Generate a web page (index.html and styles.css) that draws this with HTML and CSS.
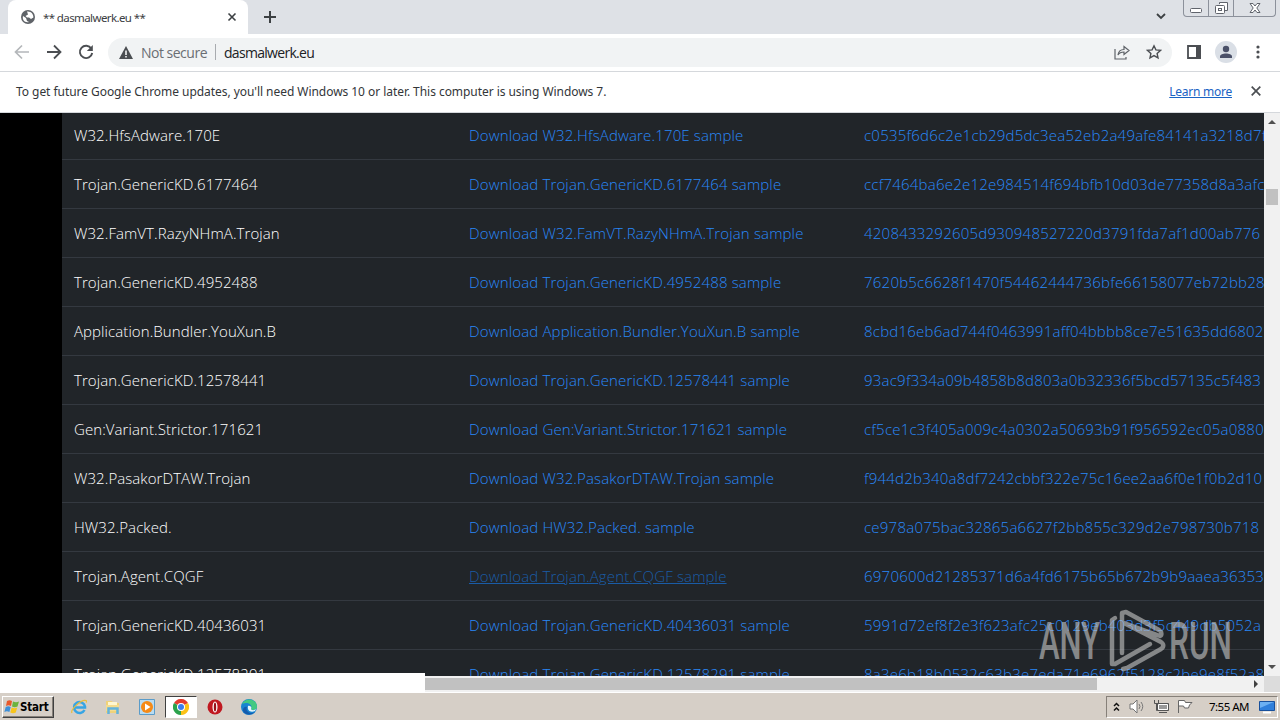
FILE: index.html
```html
<!DOCTYPE html>
<html lang="en">
<head>
    <meta charset="utf-8">
    <title>** dasmalwerk.eu **</title>
    <link rel="stylesheet" href="styles.css">
</head>
<body>
    <header class="tabstrip">
        <div class="tab">
            <svg class="globe" width="14" height="14" viewBox="0 0 14 14"><circle cx="7" cy="7" r="7" fill="#5f6368"/><path d="M2 6l3 2 1 3 2 1c-4 1-7-2-6-6zM6 1.5C10 1 12.500 4 12.400 7.500L10 9 8 7.500H6L4.500 6 7 4.500z" fill="#fff"/></svg>
            <span class="tab-title">** dasmalwerk.eu **</span>
            <svg class="tab-close" width="10" height="10" viewBox="0 0 10 10"><path d="M1.500 1.500l7 7m0-7l-7 7" stroke="#3c4043" stroke-width="1.600"/></svg>
        </div>
        <svg class="new-tab" width="12" height="12" viewBox="0 0 12 12"><path d="M6 0v12M0 6h12" stroke="#3c4043" stroke-width="2"/></svg>
        <svg class="tab-search" width="10" height="7" viewBox="0 0 10 7"><path d="M1 1l4 4 4-4" fill="none" stroke="#3c4043" stroke-width="1.800"/></svg>
        <div class="window-buttons">
            <span class="wb"><svg width="12" height="16" viewBox="0 0 12 16"><rect x=".5" y="8.500" width="11" height="4" rx="1" fill="#fff" stroke="#60646c"/></svg></span>
            <span class="wb"><svg width="13" height="16" viewBox="0 0 13 16"><path d="M4.500 4V2.500h8v8H10" fill="#fff" stroke="#60646c"/><rect x=".5" y="5.500" width="9" height="8" rx="1" fill="#fff" stroke="#60646c"/><rect x="3.500" y="8.500" width="3" height="2" fill="none" stroke="#60646c"/></svg></span>
            <span class="wb wide"><svg width="12" height="16" viewBox="0 0 12 16"><path d="M1 3.500h3l2 2.500 2-2.500h3L7.800 8l3.200 4.500H8L6 10l-2 2.500H1L4.200 8z" fill="#fff" stroke="#60646c"/></svg></span>
        </div>
    </header>

    <nav class="toolbar">
        <svg width="16" height="16" viewBox="0 0 16 16"><path d="M15 8H2m6-6.500L1.500 8 8 14.500" fill="none" stroke="#b4b7ba" stroke-width="1.700"/></svg>
        <svg width="16" height="16" viewBox="0 0 16 16"><path d="M1 8h13M8 1.500L14.500 8 8 14.500" fill="none" stroke="#4b4e52" stroke-width="1.800"/></svg>
        <svg width="16" height="16" viewBox="0 0 16 16"><path d="M13.300 4.500A6.200 6.200 0 1 0 14.200 9" fill="none" stroke="#4b4e52" stroke-width="1.900"/><path d="M14.800 1v6H8.800z" fill="#4b4e52"/></svg>
        <div class="omnibox">
            <svg width="14" height="13" viewBox="0 0 14 13"><path d="M7 0l7 13H0z" fill="#4b4e52"/><path d="M7 4.500V9m0 1v1.500" stroke="#fff" stroke-width="1.500"/></svg>
            <span class="security">Not secure</span>
            <span class="divider"></span>
            <span class="url">dasmalwerk.eu</span>
            <svg class="share" width="16" height="15" viewBox="0 0 16 15"><path d="M1 4v10h11v-2M4 10c.5-4 3-5.500 6-5.500V1.500l5 4-5 4V7C7.500 7 5.500 7.500 4 10z" fill="none" stroke="#5f6368" stroke-width="1.200"/></svg>
            <svg width="16" height="16" viewBox="0 0 16 16"><path d="M8 1.800l1.900 4.100 4.500.5-3.300 3 .9 4.400L8 11.600l-4 2.200.9-4.400-3.300-3 4.500-.5z" fill="none" stroke="#4b4e52" stroke-width="1.400"/></svg>
        </div>
        <svg class="panel" width="14" height="14" viewBox="0 0 14 14"><path d="M1 1h12v12H1z" fill="none" stroke="#4b4e52" stroke-width="1.800"/><path d="M9 0h5v14H9z" fill="#4b4e52"/></svg>
        <svg class="avatar" width="22" height="22" viewBox="0 0 22 22"><circle cx="11" cy="11" r="11" fill="#dadfe6"/><circle cx="11" cy="8" r="3.200" fill="#4a5068"/><path d="M5 17v-1.500c0-4 12-4 12 0V17z" fill="#4a5068"/></svg>
        <svg class="kebab" width="4" height="14" viewBox="0 0 4 14"><circle cx="2" cy="2" r="1.600" fill="#4b4e52"/><circle cx="2" cy="7" r="1.600" fill="#4b4e52"/><circle cx="2" cy="12" r="1.600" fill="#4b4e52"/></svg>
    </nav>

    <div class="infobar">
        <span class="info-text">To get future Google Chrome updates, you'll need Windows 10 or later. This computer is using Windows 7.</span>
        <a class="learn" href="#">Learn more</a>
        <svg width="10" height="10" viewBox="0 0 10 10"><path d="M.7.700l8.600 8.600m0-8.600L.7 9.300" stroke="#4b4e52" stroke-width="1.700"/></svg>
    </div>

    <main class="viewport">
        <div class="page">
            <table class="samples">
                <tr><td>W32.HfsAdware.170E</td><td><a href="#">Download W32.HfsAdware.170E sample</a></td><td class="hash"><a href="#">c0535f6d6c2e1cb29d5dc3ea52eb2a49afe84141a3218d7f</a></td></tr>
                <tr><td>Trojan.GenericKD.6177464</td><td><a href="#">Download Trojan.GenericKD.6177464 sample</a></td><td class="hash"><a href="#">ccf7464ba6e2e12e984514f694bfb10d03de77358d8a3afc</a></td></tr>
                <tr><td>W32.FamVT.RazyNHmA.Trojan</td><td><a href="#">Download W32.FamVT.RazyNHmA.Trojan sample</a></td><td class="hash"><a href="#">4208433292605d930948527220d3791fda7af1d00ab776</a></td></tr>
                <tr><td>Trojan.GenericKD.4952488</td><td><a href="#">Download Trojan.GenericKD.4952488 sample</a></td><td class="hash"><a href="#">7620b5c6628f1470f54462444736bfe66158077eb72bb28</a></td></tr>
                <tr><td>Application.Bundler.YouXun.B</td><td><a href="#">Download Application.Bundler.YouXun.B sample</a></td><td class="hash"><a href="#">8cbd16eb6ad744f0463991aff04bbbb8ce7e51635dd6802</a></td></tr>
                <tr><td>Trojan.GenericKD.12578441</td><td><a href="#">Download Trojan.GenericKD.12578441 sample</a></td><td class="hash"><a href="#">93ac9f334a09b4858b8d803a0b32336f5bcd57135c5f483</a></td></tr>
                <tr><td>Gen:Variant.Strictor.171621</td><td><a href="#">Download Gen:Variant.Strictor.171621 sample</a></td><td class="hash"><a href="#">cf5ce1c3f405a009c4a0302a50693b91f956592ec05a0880</a></td></tr>
                <tr><td>W32.PasakorDTAW.Trojan</td><td><a href="#">Download W32.PasakorDTAW.Trojan sample</a></td><td class="hash"><a href="#">f944d2b340a8df7242cbbf322e75c16ee2aa6f0e1f0b2d10</a></td></tr>
                <tr><td>HW32.Packed.</td><td><a href="#">Download HW32.Packed. sample</a></td><td class="hash"><a href="#">ce978a075bac32865a6627f2bb855c329d2e798730b718</a></td></tr>
                <tr><td>Trojan.Agent.CQGF</td><td><a class="hovered" href="#">Download Trojan.Agent.CQGF sample</a></td><td class="hash"><a href="#">6970600d21285371d6a4fd6175b65b672b9b9aaea36353</a></td></tr>
                <tr><td>Trojan.GenericKD.40436031</td><td><a href="#">Download Trojan.GenericKD.40436031 sample</a></td><td class="hash"><a href="#">5991d72ef8f2e3f623afc25c0129eb403d3f5c449db5052a</a></td></tr>
                <tr><td>Trojan.GenericKD.12578291</td><td><a href="#">Download Trojan.GenericKD.12578291 sample</a></td><td class="hash"><a href="#">8a3e6b18b0532c63b3e7eda71e6962f5128c2be9e8f52a8</a></td></tr>
            </table>
        </div>
        <div class="vscroll">
            <span class="arrow up"></span>
            <span class="vthumb"></span>
            <span class="arrow down"></span>
        </div>
        <svg class="watermark" width="194" height="64" viewBox="0 0 194 64">
            <text x="1" y="50" textLength="61" lengthAdjust="spacingAndGlyphs">ANY</text>
            <text x="131" y="50" textLength="63" lengthAdjust="spacingAndGlyphs">RUN</text>
            <path d="M77 9l-3 2v44h3l35-20M84 44V4l4-1 33 18c3 2 3 5 1 6L86 14l37 19c3 2 3 5 0 7L89 59l-4 1" />
        </svg>
    </main>
    <div class="hscroll">
        <span class="hthumb"></span>
        <span class="arrow right"></span>
        <span class="corner"></span>
        <div class="status-bubble"></div>
    </div>

    <footer class="taskbar">
        <button class="start">
            <svg width="16" height="16" viewBox="0 0 16 16"><path d="M3 2c2-1 3-1 5 0L7 7C5 6 4 6 2 7z" fill="#e8582a"/><path d="M9 2.500c2 1 4 1 6 0l-1.500 5c-2 1-3.500 1-5.500 0z" fill="#6cb33f"/><path d="M1.700 8c2-1 3-1 5 0l-1.300 5c-2-1-3-1-5 0z" fill="#3d8fd8"/><path d="M7.700 8.500c2 1 4 1 5.500 0l-1.400 5c-2 1-3.500 1-5.500 0z" fill="#f8c51c"/></svg>
            Start
        </button>
        <div class="quick">
            <span class="task"><svg width="16" height="16" viewBox="0 0 16 16"><path d="M13.500 11A5.500 5.500 0 1 1 14 7.500v1H4" fill="none" stroke="#37a5e4" stroke-width="2.500"/><path d="M1 14C-1 11 10 0 15 1.500c1 .4.500 1.500 0 2" fill="none" stroke="#e9bd3c" stroke-width="1.200"/></svg></span>
            <span class="task"><svg width="16" height="16" viewBox="0 0 16 16"><path d="M1 2h6l1 2h6v10H1z" fill="#efd27a"/><path d="M3 3h9v4H3z" fill="#fff7d0"/><path d="M1 6h13v6H1z" fill="#f4dc8e"/><path d="M3.500 15V9.500h9V15" fill="none" stroke="#62b3dd" stroke-width="2.500"/></svg></span>
            <span class="task"><svg width="16" height="16" viewBox="0 0 16 16"><path d="M.5.500h15v15H.5z" fill="#b9dcf2" stroke="#5b9cc9"/><circle cx="8" cy="8" r="6" fill="#f58a17"/><path d="M6 4.500L11.500 8 6 11.500z" fill="#fff"/></svg></span>
            <span class="task active"><svg width="16" height="16" viewBox="0 0 16 16"><path d="M8 8L1 4.100A8 8 0 0 1 15 4.100z" fill="#e33b2e"/><path d="M8 8l7-4A8 8 0 0 1 8 16z" fill="#fbc116"/><path d="M8 8v8A8 8 0 0 1 1 4z" fill="#2ba24c"/><circle cx="8" cy="8" r="4" fill="#fff"/><circle cx="8" cy="8" r="3" fill="#3b7ded"/></svg></span>
            <span class="task"><svg width="16" height="16" viewBox="0 0 16 16"><circle cx="8" cy="8" r="7.500" fill="#c01820"/><ellipse cx="8" cy="8" rx="2.500" ry="5.500" fill="#fff"/><ellipse cx="8" cy="8" rx="1.200" ry="4.500" fill="#981018"/></svg></span>
            <span class="task"><svg width="16" height="16" viewBox="0 0 16 16"><circle cx="8" cy="8" r="8" fill="#1784d1"/><path d="M1 5C4-2 16-1 16 8c0 3-5 4-6 2 2-4-3-8-9-5z" fill="#42c982"/><path d="M6 8c-2 4 3 8 8 5-3 4-12 3-12-2 0-2 2-4 4-3z" fill="#155bad"/><path d="M7 7c3-1 4 2 3 3 1 2 4 1 5 0l-1 2c-5 2-8-1-7-5z" fill="#e6f7fc"/></svg></span>
        </div>
        <div class="tray">
            <svg width="7" height="10" viewBox="0 0 7 10"><path d="M1 4l2.500-2.500L6 4M1 8.500L3.500 6 6 8.500" fill="none" stroke="#111" stroke-width="1.500"/></svg>
            <svg class="t-sound" width="16" height="15" viewBox="0 0 16 15"><path d="M1 5h3l4-4v13l-4-4H1z" fill="#fff" stroke="#747474"/><path d="M10 5q2 2.500 0 5M12 3q3.500 4.500 0 9" fill="none" stroke="#777"/></svg>
            <svg class="t-net" width="16" height="15" viewBox="0 0 16 15"><path d="M4.500 4.500h11v7h-11z" fill="#999" stroke="#555"/><path d="M5.500 5.500h9v5h-9z" fill="none" stroke="#fff"/><path d="M6 13.500h8M1.500 1v3.500h4V1M3.500 5v6.500h1" fill="none" stroke="#555"/></svg>
            <svg class="t-flag" width="16" height="15" viewBox="0 0 16 15"><path d="M1.500 14V1.500h6l1 2H15L12.500 6l-1 3h-4l-1-2h-5" fill="#fff" stroke="#666"/></svg>
            <span class="clock">7:55 AM</span>
            <svg class="t-desk" width="16" height="14" viewBox="0 0 16 14"><path d="M.5 1.500h15v9H.5z" fill="#2f7fdb" stroke="#18509c"/><path d="M1 2h14L1 8z" fill="#6cb0f2"/><path d="M4 12.500h8" stroke="#fff" stroke-width="2"/></svg>
        </div>
    </footer>
</body>
</html>
```
FILE: styles.css
```css
* {
    margin: 0;
    padding: 0;
    box-sizing: border-box;
}

body {
    width: 1280px;
    height: 720px;
    display: flex;
    flex-direction: column;
    overflow: hidden;
    background: #fff;
    font-family: "Noto Sans", "Open Sans", sans-serif;
    font-size: 12px;
}

svg {
    flex: none;
}

/* browser frame */
.tabstrip {
    height: 34px;
    flex: none;
    display: flex;
    background: #dee1e6;
    padding-left: 8px;
}

.tab {
    width: 240px;
    height: 34px;
    display: flex;
    align-items: center;
    padding: 0 11px 0 13px;
    background: #fff;
    border-radius: 8px 8px 0 0;
}

.tab-title {
    flex: 1;
    margin-left: 8px;
    font-size: 11.5px;
    letter-spacing: -0.6px;
    color: #3c4043;
}

.new-tab {
    margin: 11px 0 0 16px;
}

.tab-search {
    margin: 13px 17px 0 auto;
}

.window-buttons {
    width: 93px;
    height: 17px;
    display: flex;
    margin-right: 4px;
    border: 1px solid #8c919b;
    border-top: 0;
    border-radius: 0 0 4px 4px;
}

.wb {
    width: 25px;
    display: flex;
    justify-content: center;
    border-right: 1px solid #8c919b;
}

.wb.wide {
    flex: 1;
    border-right: 0;
}

.toolbar {
    height: 38px;
    flex: none;
    display: flex;
    align-items: center;
    gap: 16px;
    padding: 0 20px 1px 14px;
    border-bottom: 1px solid #d5d8dc;
}

.omnibox {
    width: 1064px;
    height: 29px;
    margin-left: -2px;
    display: flex;
    align-items: center;
    padding: 0 10px 0 11px;
    border-radius: 15px;
    background: #f1f3f4;
    font-family: "Open Sans", "Noto Sans", sans-serif;
    font-size: 14px;
}

.security {
    margin-left: 8px;
    letter-spacing: -0.5px;
    color: #6a6e73;
}

.divider {
    width: 1px;
    height: 16px;
    margin: 0 8px;
    background: #a8abaf;
}

.url {
    letter-spacing: -0.7px;
    color: #202124;
}

.share {
    margin: 0 16px 0 auto;
}

.panel {
    margin-left: -1px;
}

.avatar {
    margin-left: -2px;
}

.kebab {
    margin-left: 3px;
}

.infobar {
    height: 41px;
    flex: none;
    display: flex;
    align-items: center;
    padding: 0 19px 2px 16px;
    border-bottom: 1px solid #d5d8dc;
    color: #333639;
}

.info-text {
    letter-spacing: -0.05px;
}

.learn {
    margin: 0 19px 0 auto;
    letter-spacing: -0.25px;
    color: #1a63c4;
}

/* page content */
.viewport {
    height: 563px;
    flex: none;
    display: flex;
    position: relative;
    overflow: hidden;
    background: #000;
}

.page {
    width: 1202px;
    margin-left: 62px;
    flex: none;
    overflow: hidden;
    background: #212529;
}

.samples {
    width: 1202px;
    margin-top: -2px;
    table-layout: fixed;
    border-collapse: separate;
    border-spacing: 0;
    font-family: "Open Sans", "Noto Sans", sans-serif;
    font-size: 15px;
    font-weight: 300;
    color: #fff;
}

.samples td {
    width: 395px;
    height: 49px;
    padding: 0 12px;
    border-bottom: 1px solid #343940;
    white-space: nowrap;
    letter-spacing: 0.08px;
}

.samples td.hash {
    width: 412px;
    padding-right: 0;
    overflow: hidden;
    letter-spacing: 0.23px;
}

.samples a {
    color: #2988f8;
    letter-spacing: 0.15px;
    text-decoration: none;
}

.samples .hash a {
    letter-spacing: inherit;
}

.samples a.hovered {
    color: #1a5ca6;
    text-decoration: underline;
}

.vscroll {
    width: 16px;
    display: flex;
    flex-direction: column;
    align-items: center;
    background: #f1f1f1;
}

.arrow {
    border: 4px solid transparent;
}

.arrow.up {
    margin-top: 3px;
    border-bottom-color: #505050;
}

.vthumb {
    width: 12px;
    height: 16px;
    margin-top: 65px;
    background: #c1c1c1;
}

.arrow.down {
    margin-top: auto;
    margin-bottom: 3px;
    border-top-color: #505050;
}

.watermark {
    position: absolute;
    left: 1038px;
    top: 496px;
    opacity: 0.6;
}

.watermark text {
    font-family: Roboto, sans-serif;
    font-size: 52px;
    font-weight: 500;
    fill: #c8c8c8;
}

.watermark path {
    fill: none;
    stroke: #c8c8c8;
    stroke-width: 4.5;
    stroke-linecap: round;
    stroke-linejoin: round;
}

.hscroll {
    height: 16px;
    flex: none;
    display: flex;
    align-items: center;
    position: relative;
    background: #f1f1f1;
}

.hthumb {
    width: 672px;
    height: 12px;
    margin-left: 425px;
    background: #c1c1c1;
}

.arrow.right {
    margin-left: auto;
    margin-right: 2px;
    border-left-color: #404040;
}

.corner {
    width: 16px;
    height: 16px;
    background: #dcdcdc;
}

.status-bubble {
    position: absolute;
    left: 0;
    bottom: 0;
    width: 425px;
    height: 19px;
    background: #fff;
}

/* windows taskbar */
.taskbar {
    height: 28px;
    flex: none;
    display: flex;
    align-items: center;
    background: #d6cfc7;
    border-top: 1px solid #fff;
    box-shadow: 0 -1px #d6cfc7;
}

.start {
    width: 52px;
    height: 22px;
    margin-left: 2px;
    display: flex;
    align-items: center;
    padding-left: 1px;
    background: #d6cfc7;
    border: 1px solid;
    border-color: #fff #404040 #404040 #fff;
    box-shadow: inset -1px -1px #868079;
    font-family: "DejaVu Sans Condensed", "DejaVu Sans", sans-serif;
    font-weight: bold;
    font-size: 11.5px;
    letter-spacing: -0.2px;
    color: #000;
}

.quick {
    display: flex;
    margin-left: 9px;
    gap: 2px;
}

.task {
    width: 32px;
    height: 22px;
    display: flex;
    align-items: center;
    justify-content: center;
}

.task.active {
    background: #fff;
    border: 1px solid;
    border-color: #404040 #fff #fff #404040;
}

.tray {
    width: 172px;
    height: 22px;
    margin-left: auto;
    margin-right: 2px;
    display: flex;
    align-items: center;
    padding: 0 2px 0 6px;
    border: 1px solid;
    border-color: #868079 #fff #fff #868079;
}

.t-sound {
    margin-left: 9px;
}

.t-net,
.t-flag {
    margin-left: 8px;
}

.clock {
    margin-left: auto;
    font-size: 11.5px;
    letter-spacing: -0.5px;
    color: #000;
}

.t-desk {
    margin-left: 10px;
}
```
